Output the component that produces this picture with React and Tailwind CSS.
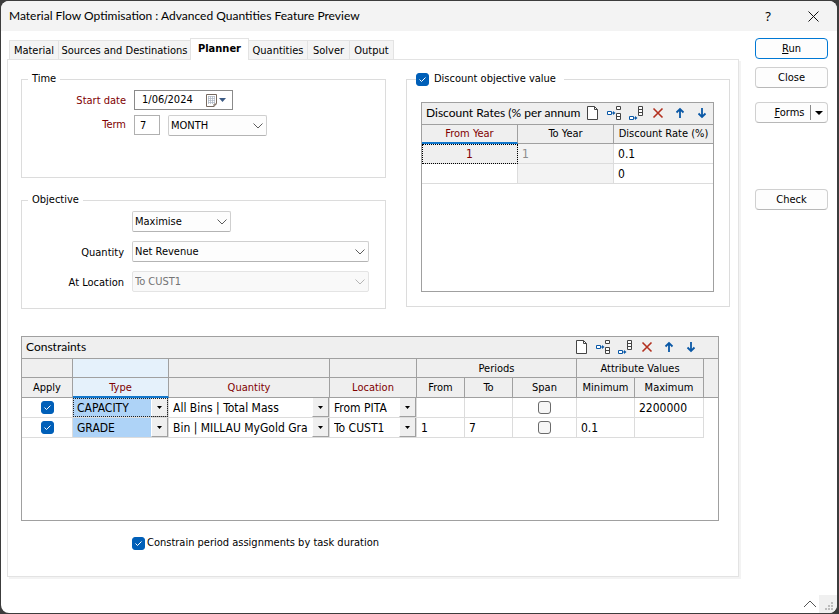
import { useState } from 'react';

const tabs = ['Material', 'Sources and Destinations', 'Planner', 'Quantities', 'Solver', 'Output'];

const tabWidths = {
    'Material': 'w-[50px]',
    'Sources and Destinations': 'w-[133px]',
    'Planner': 'w-[59px]',
    'Quantities': 'w-[60px]',
    'Solver': 'w-[43px]',
    'Output': 'w-[45px]',
};

const constraints = [
    { type: 'CAPACITY', quantity: 'All Bins | Total Mass', location: 'From PITA', from: '', to: '', min: '', max: '2200000' },
    { type: 'GRADE', quantity: 'Bin | MILLAU MyGold Gra', location: 'To CUST1', from: '1', to: '7', min: '0.1', max: '' },
];

function Check({ id, label, checked }) {
    return (
        <span className="relative inline-block w-[13px] h-[13px] shrink-0 align-middle">
            <input
                id={id}
                type="checkbox"
                aria-label={label}
                defaultChecked={checked}
                className="peer block appearance-none w-[13px] h-[13px] rounded-[3px] border border-[#6b6b6b] bg-[#f6f6f6] checked:bg-[#005fb8] checked:border-[#005fb8]"
            />
            <svg viewBox="0 0 13 13" className="absolute inset-0 hidden peer-checked:block pointer-events-none" fill="none" stroke="#fff">
                <path d="M3.5 6.5 L5.5 8.5 L9.5 4.5" />
            </svg>
        </span>
    );
}

function Combo({ id, label, value, disabled, className }) {
    return (
        <div className={'relative ' + className}>
            <select
                id={id}
                aria-label={label}
                disabled={disabled}
                className="block appearance-none w-full h-[21px] pl-[2px] pr-5 rounded-[2px] border border-[#cfcfcf] border-b-[#b4b4b4] bg-[#fdfdfd] text-black disabled:text-[#747474] disabled:bg-[#f9f9f9] disabled:border-[#e4e4e4] disabled:opacity-100"
            >
                <option>{value}</option>
            </select>
            <svg
                viewBox="0 0 10 6"
                className="absolute right-1 top-2 w-[10px] h-[6px] pointer-events-none"
                fill="none"
                stroke={disabled ? '#b5b5b5' : '#5c5c5c'}
            >
                <path d="M0.5 0.5 L5 5 L9.5 0.5" />
            </svg>
        </div>
    );
}

function CellCombo({ label, value, active, focused }) {
    return (
        <div className="relative h-[19px]">
            <select
                aria-label={label}
                className={'block appearance-none w-full h-[19px] pl-1 pr-4 ' + (active ? 'bg-[#aed3f7]' : 'bg-white')}
            >
                <option>{value}</option>
            </select>
            <span className="absolute right-0 top-0 flex items-center justify-center w-[17px] h-[19px] bg-[#efefef] border-l border-l-white border-r border-b border-r-[#a0a0a0] border-b-[#a0a0a0] pointer-events-none">
                <svg viewBox="0 0 5 3" className="w-[5px] h-[3px]"><path d="M0 0 H5 L2.5 3 Z" /></svg>
            </span>
            {focused && <span className="absolute inset-0 border border-dotted border-[#222] pointer-events-none" />}
        </div>
    );
}

function ToolButton({ label, children }) {
    return (
        <button type="button" aria-label={label} className="flex items-center justify-center w-[22px] h-5 shrink-0">
            <svg viewBox="0 0 16 16" className="w-4 h-4" fill="none">{children}</svg>
        </button>
    );
}

function GridTools() {
    return (
        <>
            <ToolButton label="New">
                <path d="M3.5 1.5 H10.5 L13.5 4.5 V14.5 H3.5 Z" fill="#fff" stroke="#444" />
                <path d="M10.5 1.5 V4.5 H13.5" stroke="#444" />
            </ToolButton>
            <ToolButton label="Insert row">
                <path d="M1.5 6.5 H5.5 V9.5 H1.5 Z" fill="#fff" stroke="#0a58a6" />
                <path d="M6 8 H8" stroke="#0a58a6" />
                <path d="M7 6 L9.5 8 L7 10 Z" fill="#0a58a6" />
                <path d="M10.5 1.5 H14.5 V4.5 H10.5 Z M10.5 8.5 H14.5 V14.5 H10.5 Z M10.5 11.5 H14.5" fill="#fff" stroke="#444" />
            </ToolButton>
            <ToolButton label="Append row">
                <path d="M1.5 11.5 H5.5 V14.5 H1.5 Z" fill="#fff" stroke="#0a58a6" />
                <path d="M6 13 H8" stroke="#0a58a6" />
                <path d="M7 11 L9.5 13 L7 15 Z" fill="#0a58a6" />
                <path d="M10.5 1.5 H14.5 V10.5 H10.5 Z M10.5 4.5 H14.5 M10.5 7.5 H14.5" fill="#fff" stroke="#444" />
            </ToolButton>
            <ToolButton label="Delete row">
                <path d="M3.5 3.5 L12.5 12.5 M12.5 3.5 L3.5 12.5" stroke="#b3301f" strokeWidth="1.6" />
            </ToolButton>
            <ToolButton label="Move up">
                <path d="M8 13 V4 M4.5 7.5 L8 4 L11.5 7.5" stroke="#0a58a6" strokeWidth="1.8" />
            </ToolButton>
            <ToolButton label="Move down">
                <path d="M8 3 V12 M4.5 8.5 L8 12 L11.5 8.5" stroke="#0a58a6" strokeWidth="1.8" />
            </ToolButton>
        </>
    );
}

function TimeGroup() {
    return (
        <fieldset className="min-w-0 border border-[#dcdcdc] pb-[41px]">
            <legend className="ml-[6px] px-1 h-4 leading-4">Time</legend>
            <div className="flex flex-col gap-[5px] pt-[3px]">
                <div className="flex items-center gap-2">
                    <label htmlFor="start" className="w-[104px] pt-[2px] text-right text-[#800000]">Start date</label>
                    <div className="flex items-center w-[99px] h-5 border border-[#8a8a8a] bg-white">
                        <input id="start" type="text" defaultValue="1/06/2024" className="w-[71px] pl-[7px] outline-none" />
                        <button type="button" aria-label="Open calendar">
                            <svg viewBox="0 0 21 13" className="w-[21px] h-[13px]" fill="none">
                                <path d="M0.5 0.5 H10.5 V9.5 L8 12.5 H0.5 Z" fill="#fff" stroke="#76695f" />
                                <path d="M2 2.5 H9 M2 4.5 H9 M2 6.5 H9 M2 8.5 H9 M2.5 2 V10 M4.5 2 V10 M6.5 2 V10 M8.5 2 V9" stroke="#aab4c2" strokeWidth="0.7" />
                                <path d="M8 12.5 V10 H10.5" stroke="#76695f" />
                                <path d="M13 4 H20 L16.5 8 Z" fill="#3c5a84" />
                            </svg>
                        </button>
                    </div>
                </div>
                <div className="flex items-start gap-2">
                    <label htmlFor="term" className="w-[104px] text-right leading-5 text-[#800000]">Term</label>
                    <input id="term" type="text" defaultValue="7" className="w-[26px] h-5 pl-[5px] border border-[#b0b0b0] bg-white outline-none" />
                    <Combo id="unit" label="Term unit" value="MONTH" className="w-[99px]" />
                </div>
            </div>
        </fieldset>
    );
}

function ObjectiveGroup() {
    return (
        <fieldset className="min-w-0 border border-[#dcdcdc] pb-4 pr-4">
            <legend className="ml-[6px] px-1 h-4 leading-4">Objective</legend>
            <div className="grid grid-cols-[102px_1fr] gap-x-2 gap-y-[9px] items-center pt-[3px]">
                <Combo id="goal" label="Goal" value="Maximise" className="col-start-2 w-[99px]" />
                <label htmlFor="quantity" className="pt-[2px] text-right">Quantity</label>
                <Combo id="quantity" value="Net Revenue" className="w-full" />
                <label htmlFor="location" className="pt-[2px] text-right">At Location</label>
                <Combo id="location" value="To CUST1" disabled className="w-full" />
            </div>
        </fieldset>
    );
}

function DiscountGroup() {
    const head = 'h-[19px] border-[#a0a0a0] font-normal p-0 bg-[#efefef] whitespace-nowrap';
    const cell = 'h-5 border-b border-r border-[#dcdcdc] py-0 px-1 last:border-r-0';

    return (
        <fieldset className="min-w-0 border border-[#dcdcdc] pl-[14px] pr-[15px] pb-[14px]">
            <legend className="-ml-[5px] pr-2 h-4 leading-4">
                <span className="flex items-center gap-[5px]">
                    <Check id="discount" checked />
                    <label htmlFor="discount">Discount objective value</label>
                </span>
            </legend>
            <div className="mt-[15px] h-[190px] border border-[#a0a0a0] bg-white">
                <div className="flex h-[22px] pl-1 border-b border-[#a0a0a0] bg-[#efefef]">
                    <span className="flex-1 min-w-0 whitespace-nowrap font-[Lato,sans-serif] text-xs leading-5">Discount Rates (% per annum</span>
                    <GridTools />
                </div>
                <table className="w-full table-fixed border-separate border-spacing-0">
                    <colgroup>
                        <col className="w-[33%]" />
                        <col className="w-[33%]" />
                        <col className="w-[34%]" />
                    </colgroup>
                    <thead>
                        <tr>
                            <th className={head + ' border-r border-b-2 border-b-[#1177cc] text-[#800000]'}>From Year</th>
                            <th className={head + ' border-r border-b'}>To Year</th>
                            <th className={head + ' border-b'}>Discount Rate (%)</th>
                        </tr>
                    </thead>
                    <tbody className="text-xs">
                        <tr>
                            <td className={cell + ' text-center text-[#800000] bg-[#efefef] outline-1 -outline-offset-1 outline-dotted outline-black'}>1</td>
                            <td className={cell + ' bg-[#f3f3f3] text-[#8c8c8c]'}>1</td>
                            <td className={cell}>0.1</td>
                        </tr>
                        <tr>
                            <td className={cell}></td>
                            <td className={cell + ' bg-[#f3f3f3]'}></td>
                            <td className={cell}>0</td>
                        </tr>
                    </tbody>
                </table>
            </div>
        </fieldset>
    );
}

function ConstraintsGrid() {
    const base = 'border-[#a0a0a0] font-normal px-0 pb-0';
    const head = base + ' pt-px border-r border-b bg-[#efefef]';
    const cell = 'h-5 border-b border-r border-[#dcdcdc] py-0';

    return (
        <div className="h-[185px] mr-[11px] border border-[#a0a0a0] bg-white">
            <div className="flex h-[22px] pl-1 pr-4 border-b border-[#a0a0a0] bg-[#efefef]">
                <span className="flex-1 font-[Lato,sans-serif] text-xs leading-5">Constraints</span>
                <GridTools />
            </div>
            <table className="w-full table-fixed border-separate border-spacing-0">
                <colgroup>
                    <col className="w-[51px]" />
                    <col className="w-[96px]" />
                    <col />
                    <col className="w-[87px]" />
                    <col className="w-[48px]" />
                    <col className="w-[48px]" />
                    <col className="w-[64px]" />
                    <col className="w-[58px]" />
                    <col className="w-[69px]" />
                    <col className="w-[14px]" />
                </colgroup>
                <thead>
                    <tr className="h-[19px]">
                        <th className={head}></th>
                        <th className={base + ' border-r border-b bg-[#e5f1fb]'}></th>
                        <th className={head}></th>
                        <th className={head}></th>
                        <th className={head} colSpan={3}>Periods</th>
                        <th className={head} colSpan={2}>Attribute Values</th>
                        <th className={base + ' border-b bg-[#efefef]'} rowSpan={2}></th>
                    </tr>
                    <tr className="h-5">
                        <th className={head}>Apply</th>
                        <th className={base + ' pt-px border-r border-b-2 border-b-[#1177cc] bg-[#e5f1fb] text-[#800000]'}>Type</th>
                        <th className={head + ' text-[#800000]'}>Quantity</th>
                        <th className={head + ' text-[#800000]'}>Location</th>
                        <th className={head}>From</th>
                        <th className={head}>To</th>
                        <th className={head}>Span</th>
                        <th className={head}>Minimum</th>
                        <th className={head}>Maximum</th>
                    </tr>
                </thead>
                <tbody className="text-xs">
                    {constraints.map((row, i) => (
                        <tr key={row.type}>
                            <td className={cell + ' px-0 text-center leading-none'}><Check label={'Apply ' + row.type} checked /></td>
                            <td className={cell + ' px-0'}><CellCombo label="Type" value={row.type} active focused={i === 0} /></td>
                            <td className={cell + ' px-0'}><CellCombo label="Quantity" value={row.quantity} /></td>
                            <td className={cell + ' px-0'}><CellCombo label="Location" value={row.location} /></td>
                            <td className={cell + ' px-1'}>{row.from}</td>
                            <td className={cell + ' px-1'}>{row.to}</td>
                            <td className={cell + ' px-0 text-center leading-none'}><Check label={'Span ' + row.type} /></td>
                            <td className={cell + ' px-1'}>{row.min}</td>
                            <td className={cell + ' px-1'}>{row.max}</td>
                            <td className="p-0"></td>
                        </tr>
                    ))}
                </tbody>
            </table>
        </div>
    );
}

function App() {
    const [active, setActive] = useState('Planner');
    const shape = 'w-full h-[21px] rounded-[4px] border bg-[#fdfdfd]';
    const button = shape + ' border-[#d0d0d0] border-b-[#b8b8b8]';

    return (
        <div className="min-h-screen flex pl-px pt-px pb-px pr-[2px] bg-[#3c3c3c] text-black text-[11px] leading-4 font-['DejaVu_Sans_Condensed','DejaVu_Sans',sans-serif]">
            <div className="flex-1 min-w-0 flex flex-col bg-white rounded-lg overflow-hidden">

                {/* Title bar */}
                <header className="flex items-center h-[30px] pl-2 pr-[18px] bg-[#f3f3f3]">
                    <h1 className="flex-1 font-[Lato,sans-serif] text-xs">Material Flow Optimisation : Advanced Quantities Feature Preview</h1>
                    <button type="button" className="w-5 mr-[30px] font-['Noto_Sans',sans-serif] text-[13px]">?</button>
                    <button type="button" aria-label="Close window">
                        <svg viewBox="0 0 11 11" className="w-[11px] h-[11px]" fill="none" stroke="#111"><path d="M0.5 0.5 L10.5 10.5 M10.5 0.5 L0.5 10.5" /></svg>
                    </button>
                </header>

                <div className="flex-1 flex pl-[6px] pr-[9px] pt-[6px]">
                    <main className="flex-1 min-w-0">

                        {/* Tabs */}
                        <div role="tablist" className="flex items-end h-[22px] pl-[2px]">
                            {tabs.map((tab) => (
                                <button
                                    key={tab}
                                    type="button"
                                    role="tab"
                                    aria-selected={tab === active}
                                    onClick={() => setActive(tab)}
                                    className={tabWidths[tab] + ' shrink-0 whitespace-nowrap border border-b-0 border-[#e3e3e3] ' + (tab === active
                                        ? 'relative z-10 h-[22px] -ml-px -mb-px pb-px bg-white font-bold'
                                        : 'h-[19px] -ml-px first:ml-0 pt-px bg-[#f4f4f4]')}
                                >
                                    {tab}
                                </button>
                            ))}
                        </div>

                        {/* Planner page */}
                        <div className="h-[518px] pl-[13px] pr-2 pt-[11px] border border-[#e3e3e3] shadow-[2px_2px_0_#f3f3f3]">
                            <div className="grid grid-cols-[minmax(0,365fr)_minmax(0,324fr)] gap-5 items-start">
                                <div className="flex flex-col gap-[14px]">
                                    <TimeGroup />
                                    <ObjectiveGroup />
                                </div>
                                <DiscountGroup />
                            </div>
                            <div className="mt-[27px]">
                                <ConstraintsGrid />
                            </div>
                            <div className="flex items-center gap-[2px] mt-[14px] ml-[111px]">
                                <Check id="duration" checked />
                                <label htmlFor="duration">Constrain period assignments by task duration</label>
                            </div>
                        </div>
                    </main>

                    {/* Actions */}
                    <aside className="w-[73px] ml-4 pt-px shrink-0 flex flex-col">
                        <button type="button" className={shape + ' border-[#0078d4]'}><u>R</u>un</button>
                        <button type="button" className={button + ' mt-2'}>Close</button>
                        <div className={button + ' mt-[14px] flex items-center'}>
                            <button type="button" className="flex-1 pl-[13px]"><u>F</u>orms</button>
                            <button type="button" aria-label="More forms" className="flex items-center justify-center w-[17px] h-[15px] border-l border-[#8a8a8a]">
                                <svg viewBox="0 0 8 4" className="w-2 h-1"><path d="M0 0 H8 L4 4 Z" /></svg>
                            </button>
                        </div>
                        <button type="button" className={button + ' mt-[66px]'}>Check</button>
                    </aside>
                </div>

                {/* Collapse and resize grip */}
                <footer className="flex items-center justify-end gap-[2px] h-[18px]">
                    <button type="button" aria-label="Collapse">
                        <svg viewBox="0 0 14 8" className="w-[14px] h-2" fill="none" stroke="#555"><path d="M1 7 L7 1 L13 7" /></svg>
                    </button>
                    <svg viewBox="0 0 18 18" className="w-[18px] h-[18px] bg-[#f0f0f0]" fill="#bdbdbd">
                        <path d="M12 7h2v2h-2z M9 10h2v2h-2z M12 10h2v2h-2z M6 13h2v2h-2z M9 13h2v2h-2z M12 13h2v2h-2z" />
                    </svg>
                </footer>
            </div>
        </div>
    );
}

export default App;
